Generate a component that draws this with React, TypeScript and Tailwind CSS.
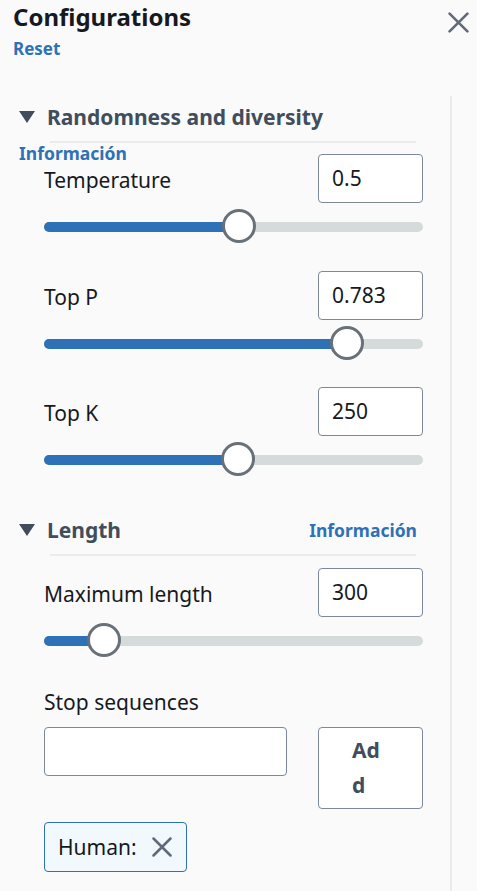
import React from "react";

function Caret() {
  return (
    <svg width="16" height="12" viewBox="0 0 16 12" className="shrink-0">
      <polygon points="0,0 16,0 8,12" fill="#414d5c" />
    </svg>
  );
}

function Cross({ size = 20 }: { size?: number }) {
  return (
    <svg width={size} height={size} viewBox="0 0 20 20" className="shrink-0">
      <path d="M1.5 1.5 L18.5 18.5 M18.5 1.5 L1.5 18.5" stroke="#5f6b7a" strokeWidth="2.5" strokeLinecap="round" fill="none" />
    </svg>
  );
}

function NumberRow({ label, value, className = "" }: { label: string; value: string; className?: string }) {
  return (
    <div className={`flex items-center justify-between pl-[44px] pr-[27px] ${className}`}>
      <span className="pt-[3px] text-[21px] leading-[28px] text-[#16191f]">{label}</span>
      <div className="flex h-[49px] w-[105px] items-center rounded-[4px] border border-[#7d8998] bg-white pl-[13px] text-[21px] text-[#16191f]">
        {value}
      </div>
    </div>
  );
}

function Slider({ pct }: { pct: number }) {
  return (
    <div className="relative ml-[44px] mr-[27px] mt-[6px] h-[34px]">
      <div className="absolute left-0 right-0 top-[13px] h-[10px] rounded-full bg-[#d5dbdb]" />
      <div className="absolute left-0 top-[13px] h-[10px] rounded-full bg-[#2e71b6]" style={{ width: `${pct}%` }} />
      <div
        className="absolute top-0 -ml-[17px] h-[34px] w-[34px] rounded-full border-[3px] border-[#687078] bg-white"
        style={{ left: `${pct}%` }}
      />
    </div>
  );
}

export default function App() {
  return (
    <div className="h-[891px] w-[477px] overflow-hidden bg-[#fafafa] font-['Noto_Sans',sans-serif]">
      {/* header */}
      <div className="flex justify-between">
        <div className="pl-[13px]">
          <h1 className="text-[24px] font-bold leading-[33px] text-[#16191f]">Configurations</h1>
          <div className="mt-[4px] text-[17px] font-bold leading-[24px] text-[#2e71b6]">Reset</div>
        </div>
        <div className="mr-[8px] mt-[12px]">
          <Cross size={21} />
        </div>
      </div>

      {/* settings column */}
      <div className="mt-[35px] h-[800px] w-[452px] border-r-2 border-[#e9ebed] pt-[7px]">
        <div className="flex items-center gap-[12px] pl-[19px]">
          <Caret />
          <h2 className="text-[21px] font-bold leading-[28px] text-[#414d5c]">Randomness and diversity</h2>
        </div>
        <div className="ml-[50px] mt-[10px] h-[2px] w-[366px] bg-[#e9ebed]" />
        <div className="-mb-[9px] pl-[19px] text-[17.5px] font-bold leading-[20px] text-[#2e71b6]">Información</div>

        <NumberRow label="Temperature" value="0.5" />
        <Slider pct={51.4} />

        <NumberRow label="Top P" value="0.783" className="mt-[28px]" />
        <Slider pct={79.9} />

        <NumberRow label="Top K" value="250" className="mt-[27px]" />
        <Slider pct={51.3} />

        <div className="mt-[40px] flex items-center justify-between pl-[19px] pr-[33px]">
          <div className="flex items-center gap-[12px]">
            <Caret />
            <h2 className="text-[21px] font-bold leading-[28px] text-[#414d5c]">Length</h2>
          </div>
          <span className="text-[17.5px] font-bold leading-[20px] text-[#2e71b6]">Información</span>
        </div>
        <div className="ml-[50px] mt-[10px] h-[2px] w-[366px] bg-[#e9ebed]" />

        <NumberRow label="Maximum length" value="300" className="mt-[12px]" />
        <Slider pct={15.8} />

        <div className="mt-[31px] pl-[44px] text-[21px] leading-[28px] text-[#16191f]">Stop sequences</div>
        <div className="mt-[11px] flex items-start gap-[31px] pl-[44px]">
          <div className="h-[49px] w-[243px] rounded-[4px] border border-[#7d8998] bg-white" />
          <button className="flex h-[82px] w-[105px] items-center rounded-[4px] border border-[#7d8998] bg-white pl-[33px] pr-[33px] text-left">
            <span className="break-all text-[21px] font-bold leading-[35px] text-[#414d5c]">Add</span>
          </button>
        </div>

        <div className="ml-[44px] mt-[13px] flex h-[50px] w-[143px] items-center gap-[15px] rounded-[4px] border border-[#2e71b6] bg-[#f1f8fe] pl-[13px]">
          <span className="text-[21px] leading-[28px] text-[#16191f]">Human:</span>
          <Cross size={20} />
        </div>
      </div>
    </div>
  );
}
